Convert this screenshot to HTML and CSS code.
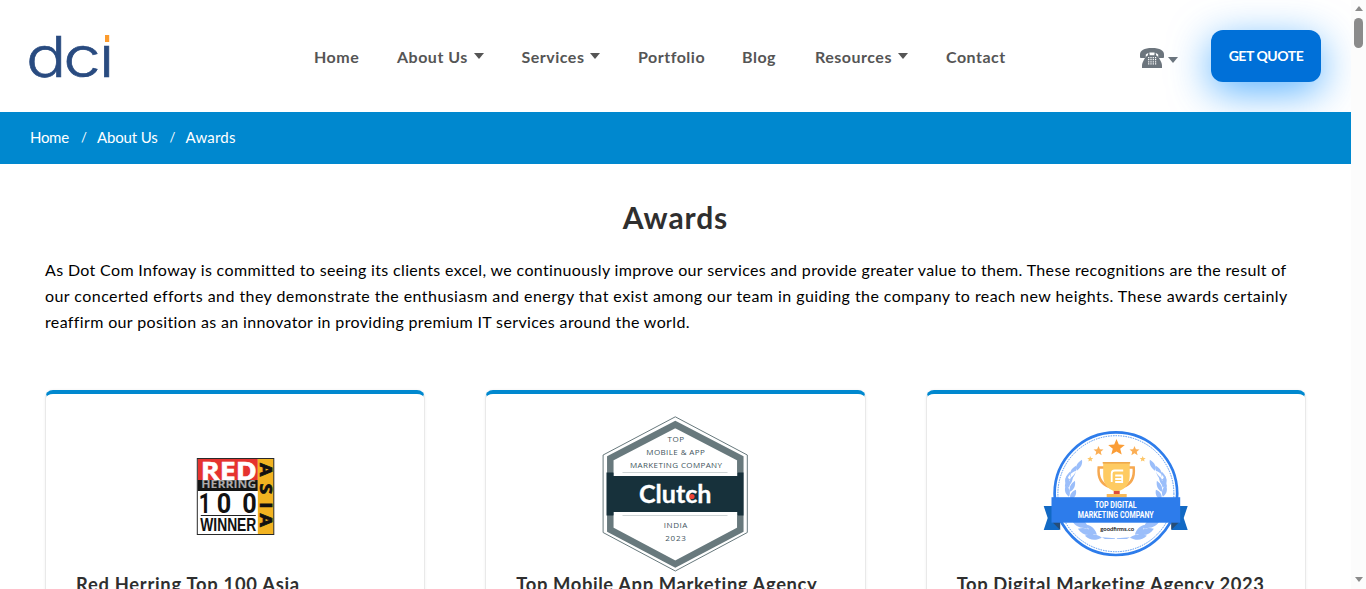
FILE: index.html
```
<!DOCTYPE html>
<html lang="en">
<head>
<meta charset="utf-8">
<title>Awards - DCI</title>
<link rel="stylesheet" href="styles.css">
</head>
<body>
<div class="page">
  <header class="header">
    <a class="logo" aria-label="dci">
      <svg width="84" height="50" viewBox="28 32 84 50">
        <text class="logo-text" transform="translate(26 76.500) scale(1.200 1)" x="0 31 60.600" y="0">dci</text>
        <rect x="100" y="32" width="12" height="12.500" fill="#fff"/>
        <rect x="105" y="35" width="4.200" height="7" fill="#fc9b2d"/>
      </svg>
    </a>
    <nav class="nav">
      <a class="n-home">Home</a>
      <a class="n-about">About Us<i class="caret"></i></a>
      <a class="n-services">Services<i class="caret"></i></a>
      <a class="n-portfolio">Portfolio</a>
      <a class="n-blog">Blog</a>
      <a class="n-resources">Resources<i class="caret"></i></a>
      <a class="n-contact">Contact</a>
    </nav>
    <div class="phone">
      <svg width="24" height="20" viewBox="0 0 24 20">
        <path d="M0 9V6.500C0 2.500 4 0 12 0s12 2.500 12 6.500V9c0 .7-.5 1-1.200 1h-3.300c-.8 0-1.300-.4-1.300-1V6.600C16.500 5.200 14.500 4.600 12 4.600s-4.500.6-6.200 2V9c0 .6-.5 1-1.300 1H1.200C.5 10 0 9.700 0 9z" fill="#6c757d"/>
        <path d="M8 5.200h1.600v2h4.800v-2H16v2c2 1 3.500 3 5 6.500.7 1.500 1 2.500 1 4V20H2v-2.300c0-1.500.3-2.500 1-4C4.500 10.200 6 8.200 8 7.200z" fill="#6c757d"/>
        <path d="M8.700 9v7.500M11 9v7.500M13.300 9v7.500M15.600 9v7.500" stroke="#fff" stroke-width="1.200" stroke-dasharray="1.200 .9"/>
      </svg>
      <i class="caret"></i>
    </div>
    <a class="quote">GET QUOTE</a>
  </header>
  <div class="crumbs"><a class="c-home">Home</a><span>/</span><a class="c-about">About Us</a><span>/</span><a class="c-awards">Awards</a></div>
  <main class="main">
    <h1>Awards</h1>
    <p class="intro">
      <span class="l1">As Dot Com Infoway is committed to seeing its clients excel, we continuously improve our services and provide greater value to them. These recognitions are the result of</span>
      <span class="l2">our concerted efforts and they demonstrate the enthusiasm and energy that exist among our team in guiding the company to reach new heights. These awards certainly</span>
      <span class="l3">reaffirm our position as an innovator in providing premium IT services around the world.</span>
    </p>
    <div class="cards">
      <article class="card">
        <svg class="badge" viewBox="155.2 414 160 160">
          <rect x="197.500" y="458.500" width="76.500" height="76" fill="#fff"/>
          <rect x="198" y="459" width="60" height="21" fill="#e5332f"/>
          <rect x="198" y="480" width="60" height="11" fill="#151515"/>
          <rect x="258" y="459" width="16" height="75" fill="#f2b321"/>
          <text class="rh-red" x="201" y="480" textLength="56" lengthAdjust="spacingAndGlyphs">RED</text>
          <text class="rh-herring" x="201.500" y="488" textLength="55" lengthAdjust="spacingAndGlyphs">HERRING</text>
          <text class="rh-num" x="199" y="513" textLength="12" lengthAdjust="spacingAndGlyphs">1</text>
          <text class="rh-num" x="217" y="513" textLength="14.500" lengthAdjust="spacingAndGlyphs">0</text>
          <text class="rh-num" x="242.500" y="513" textLength="14.500" lengthAdjust="spacingAndGlyphs">0</text>
          <path d="M201 515.500h55" stroke="#222" stroke-width="1"/>
          <text class="rh-win" x="200.500" y="531" textLength="56" lengthAdjust="spacingAndGlyphs">WINNER</text>
          <text class="rh-asia" transform="translate(260.500 463) rotate(90) scale(1.250 1)" x="0 16.500 31.500 40.500" y="0">ASIA</text>
          <rect x="197.500" y="458.500" width="76.500" height="76" fill="none" stroke="#292929"/>
        </svg>
        <h2 class="t1">Red Herring Top 100 Asia</h2>
      </article>
      <article class="card">
        <svg class="badge" viewBox="595.500 414 160 160">
          <path d="M675.800 416.800L747.800 455v77.500L675.800 571l-72.200-38.500V455z" fill="#fff" stroke="#68797d" stroke-width="1"/>
          <path d="M675.800 424.500L740.800 458.300v71.400L675.800 564l-65-34.300v-71.400z" fill="none" stroke="#68797d" stroke-width="6.500"/>
          <rect x="607" y="472.500" width="137" height="43" fill="#17313b"/>
          <path d="M614.200 472h123.500v4H614.200zM614.200 512h123.500v4H614.200z" fill="#fff"/>
          <path d="M623 472.500h105M623 515.500h105" stroke="#b9c1c3" stroke-width=".7"/>
          <g class="cl-small">
            <text x="668" y="442" textLength="16.500">TOP</text>
            <text x="646.800" y="455" textLength="58.500">MOBILE &amp; APP</text>
            <text x="630.500" y="468" textLength="92">MARKETING COMPANY</text>
            <text x="664.300" y="528" textLength="23.500">INDIA</text>
            <text x="665.800" y="541" textLength="20.500">2023</text>
          </g>
          <text class="cl-big" x="639.500" y="503" textLength="72.500" lengthAdjust="spacingAndGlyphs">Clutch</text>
          <circle cx="692.500" cy="496.500" r="2.600" fill="#ef4335"/>
        </svg>
        <h2 class="t2">Top Mobile App Marketing Agency</h2>
      </article>
      <article class="card">
        <svg class="badge" viewBox="1035.800 414 160 160">
          <defs>
            <path id="star" d="M0-8.500L2.300-2.900 8.300-2.500 3.700 1.300 5.200 7.100 0 3.900-5.200 7.100-3.700 1.300-8.300-2.500-2.300-2.900z"/>
            <g id="laurel" fill="#9bbefa">
              <path d="M-29-36c-5 3-7 7-5 11 4-3 6-7 5-11zM-35-30c-5 3-7 7-5 12 4-3 6-7 5-12zM-41-24c-4 4-6 8-3 12 4-3 5-7 3-12zM-35-25c-1 6-4 9-9 10 1-5 4-8 9-10zM-38-18c-1 6-4 9-8 9 0-5 3-8 8-9z" transform="translate(-5 2)"/>
              <path d="M-49-18c-3 5-2 9 2 12 2-4 1-8-2-12zM-50-9c-2 5-1 9 3 12 2-4 1-8-3-12zM-41-13c1 5-1 9-5 11-1-5 1-8 5-11zM-40-4c1 5-1 8-5 10-2-4 0-8 5-10z"/>
              <path d="M-44 27c7-2 12 1 15 7-7 1-12-2-15-7zM-38 35c7-2 12 0 17 5-7 3-13 1-17-5zM-37 25c5 1 9 5 9 10-5-1-9-5-9-10zM-29 31c5 1 9 5 10 10-5-1-9-5-10-10zM-31 42c7-3 13-1 17 2-6 3-12 3-17-2zM-14 43.500l13 1v.8h-10z"/>
            </g>
          </defs>
          <circle cx="1115.700" cy="493.700" r="61.300" fill="#fff" stroke="#2d7ceb" stroke-width="2.700"/>
          <circle cx="1115.700" cy="493.700" r="58" fill="none" stroke="#2d7ceb" stroke-width=".8" stroke-dasharray="1.500 1"/>
          <use href="#laurel" transform="translate(1115.700 493.700)"/>
          <use href="#laurel" transform="translate(1115.700 493.700) scale(-1 1)"/>
          <use href="#star" transform="translate(1116.300 447.500)" fill="#fb9d36"/>
          <use href="#star" transform="translate(1098.300 451) scale(.6)" fill="#fbae54"/>
          <use href="#star" transform="translate(1134.300 451) scale(.6)" fill="#fbae54"/>
          <use href="#star" transform="translate(1090 459) scale(.36)" fill="#fdc668"/>
          <use href="#star" transform="translate(1142.500 459) scale(.36)" fill="#fdc668"/>
          <path d="M1104 467.500h-5.500c-1 10 3 17 11 19.500M1128 467.500h5.500c1 10-3 17-11 19.500" fill="none" stroke="#f6a850" stroke-width="2.500"/>
          <path d="M1103 463h26.500v13c0 8-5 13-10.500 15h-5.500c-5.500-2-10.500-7-10.500-15z" fill="#fecb62"/>
          <path d="M1102.500 462h27.500v1.600h-27.500z" fill="#efa94b"/>
          <path d="M1113.500 491h6v3.500h-6z" fill="#df4e3c"/><path d="M1106.500 494h20v3.500h-20z" fill="#f9ba58"/>
          <path d="M1123 470.500h-8.500q-3 0-3 3v8.500M1122.500 475.500h-7.500M1115 479h7v-3.500M1122 479v3h-7" fill="none" stroke="#fff" stroke-width="1.800"/>
          <path d="M1043.500 506h16v24h-16l4-12zM1187.500 506h-16v24h16l-4-12z" fill="#1269c4"/>
          <path d="M1052 522h8v8zM1179 522h-8v8z" fill="#264d78"/>
          <rect x="1051.300" y="497.200" width="128.700" height="25.500" fill="#2d7ceb"/>
          <text class="gf" x="1094.500" y="507.500" textLength="42" lengthAdjust="spacingAndGlyphs">TOP DIGITAL</text>
          <text class="gf" x="1077.500" y="517.500" textLength="76" lengthAdjust="spacingAndGlyphs">MARKETING COMPANY</text>
          <text class="gf-site" x="1100" y="531" textLength="34" lengthAdjust="spacingAndGlyphs">goodfirms.co</text>
        </svg>
        <h2 class="t3">Top Digital Marketing Agency 2023</h2>
      </article>
    </div>
  </main>
</div>
<div class="scrollbar"><i class="up"></i><i class="thumb"></i><i class="down"></i></div>
</body>
</html>
```
FILE: styles.css
```
* { box-sizing: border-box; }
body {
  margin: 0;
  height: 589px;
  overflow: hidden;
  display: flex;
  background: #fff;
  font-family: Lato, "Open Sans", sans-serif;
  font-size: 16px;
  color: #000;
}
.page { width: 1351px; height: 589px; overflow: hidden; }
.header {
  height: 112px;
  display: flex;
  align-items: flex-start;
  padding: 30px 30px 0 28px;
  overflow: hidden;
}
.logo { width: 84px; height: 50px; padding-top: 2px; }
.logo svg { overflow: visible; }
.logo-text { font: 300 56px Inter, sans-serif; fill: #294b80; stroke: #294b80; stroke-width: .6px; }
.nav {
  display: flex;
  gap: 38px;
  margin-left: 202px;
  padding-top: 15px;
  width: 826px;
  line-height: 24px;
  font-weight: 700;
  color: #555;
  letter-spacing: .5px;
  white-space: nowrap;
}
.nav a { display: flex; align-items: center; }
.caret {
  display: inline-block;
  border: 5px solid transparent;
  border-top: 6px solid currentColor;
  border-bottom: 0;
}
.nav .caret { margin: -2px 0 0 auto; }
.n-home { width: 45px; }
.n-about { width: 86.500px; }
.n-services { width: 78.500px; }
.n-portfolio { width: 66px; }
.n-blog { width: 35px; }
.n-resources { width: 93px; }
.n-contact { width: 60px; }
.phone { display: flex; align-items: center; gap: 4px; padding-top: 18px; color: #6c757d; width: 71px; }
.phone .caret { margin-top: 4px; }
.quote {
  width: 110px;
  height: 52px;
  border-radius: 12px;
  background: #0070d8;
  color: #fff;
  box-shadow: 0 10px 40px rgba(0, 136, 255, .65);
  font: 700 14px/52px Lato, sans-serif;
  letter-spacing: -.45px;
  text-align: center;
  white-space: nowrap;
}
.crumbs {
  position: relative;
  height: 52px;
  padding-left: 30px;
  background: #0088cf;
  color: #fff;
  font-size: 15px;
  line-height: 50px;
  display: flex;
  white-space: nowrap;
}
.crumbs span { width: 28px; padding-left: 2px; text-align: center; font-size: 13px; line-height: 51px; }
.c-home { width: 39px; letter-spacing: -.3px; }
.c-about { width: 60.500px; letter-spacing: -.15px; }
.c-awards { letter-spacing: .2px; }
.main { padding: 35px 45px 0; }
h1 { margin: 0; height: 36px; font-size: 30px; line-height: 36px; text-align: center; color: #2f2f2f; letter-spacing: .9px; }
.intro { margin: 22px 0 55px; line-height: 26px; white-space: nowrap; }
.intro span { display: block; }
.l1 { letter-spacing: .345px; }
.l2 { letter-spacing: .44px; }
.l3 { letter-spacing: .36px; }
.cards { display: grid; grid-template-columns: repeat(3, 1fr); gap: 60px; }
.card {
  height: 300px;
  padding: 20px 30px;
  border: 1px solid #e9e9e9;
  border-top: 4px solid #0088cf;
  border-radius: 8px;
  box-shadow: 0 0 3px rgba(0, 0, 0, .06);
}
.badge { display: block; width: 160px; height: 160px; margin: 0 auto; }
h2 { margin: 0; font-size: 18.400px; line-height: 20px; color: #2f2f2f; white-space: nowrap; letter-spacing: .6px; }
.t1 { letter-spacing: .7px; }
.rh-red { font: 700 25px "Open Sans", sans-serif; fill: #fff; stroke: #fff; stroke-width: .6px; }
.rh-herring { font: 700 10.500px "Open Sans", sans-serif; fill: #aaa; }
.rh-num { font: 700 28px Roboto, sans-serif; fill: #111; }
.rh-win { font: 700 19px "Liberation Sans", sans-serif; fill: #111; }
.rh-asia { font: 700 15.500px "Open Sans", sans-serif; fill: #111; stroke: #111; stroke-width: .7px; }
.cl-small { font: 500 8px "Open Sans", sans-serif; fill: #3f555d; }
.cl-big { font: 700 24px Lato, sans-serif; fill: #fff; stroke: #fff; stroke-width: .3px; }
.gf { font: 700 8.500px Roboto, sans-serif; fill: #fff; }
.gf-site { font: 700 6px Lato, sans-serif; fill: #222; }
.scrollbar {
  width: 15px;
  height: 589px;
  background: #fcfcfc;
  display: flex;
  flex-direction: column;
  align-items: center;
  padding: 6px 0 7px;
}
.up, .down { border: 4.500px solid transparent; }
.up { border-top: 0; border-bottom: 5px solid #8b8b8b; }
.down { border-bottom: 0; border-top: 5px solid #8b8b8b; margin-top: auto; }
.thumb { width: 9px; height: 30px; border-radius: 5px; background: #8b8b8b; margin-top: 7px; }
```
